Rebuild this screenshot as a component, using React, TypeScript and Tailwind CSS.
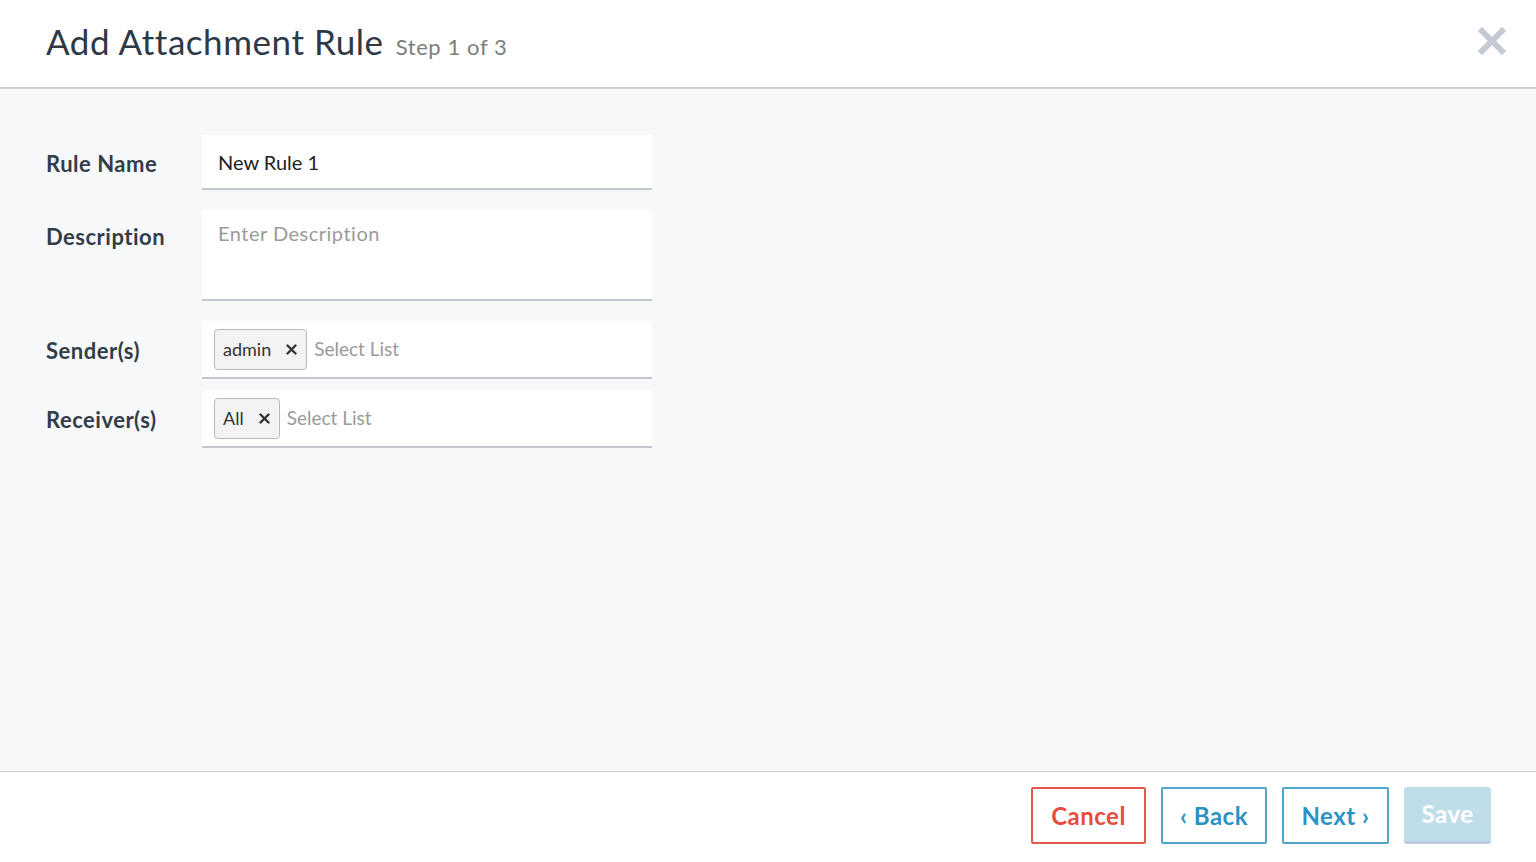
import React from "react";

function Tag({ label }: { label: string }) {
  return (
    <span className="flex items-center h-[41px] pl-[8px] pr-[8px] gap-[15px] bg-[#f3f3f3] border border-[#b9b9b9] rounded-[4px] text-[18px] text-[#333]">
      <span>{label}</span>
      <svg width="11" height="11" viewBox="0 0 11 11" className="mr-[1px]">
        <path d="M1.5 1.5 L9.5 9.5 M9.5 1.5 L1.5 9.5" stroke="#333" strokeWidth="2.4" strokeLinecap="round" />
      </svg>
    </span>
  );
}

export default function App() {
  return (
    <div className="w-[1536px] h-[862px] flex flex-col bg-white text-[#333c47]" style={{ fontFamily: "Lato, 'Noto Sans', sans-serif" }}>
      <header className="h-[89px] shrink-0 flex items-start justify-between border-b-2 border-[#cdd1d8] bg-white">
        <div className="flex items-baseline pl-[46px] pt-[15px]">
          <h1 className="text-[35px] font-normal text-[#2f3845] tracking-[0.55px]">Add Attachment Rule</h1>
          <span className="ml-[12px] text-[22px] text-[#7d7d7d] tracking-[0.6px]">Step 1 of 3</span>
        </div>
        <button className="mt-[27px] mr-[30px]">
          <svg width="28" height="28" viewBox="0 0 28 28">
            <path d="M4 4 L24 24 M24 4 L4 24" stroke="#c5c9d1" strokeWidth="6" strokeLinecap="square" />
          </svg>
        </button>
      </header>

      <main className="flex-1 bg-[#f7f8fa] pt-[46px] pl-[46px]">
        <div className="flex flex-col">
          <div className="flex items-start">
            <label className="w-[156px] pt-[12px] text-[22px] font-bold text-[#333d48] tracking-[0.5px]">Rule Name</label>
            <div className="w-[450px] h-[55px] bg-white border-b-2 border-[#c3c7d0] flex items-center px-[16px] text-[20px] text-[#222]">
              New Rule 1
            </div>
          </div>
          <div className="flex items-start mt-[20px]">
            <label className="w-[156px] pt-[10px] text-[22px] font-bold text-[#333d48] tracking-[0.5px]">Description</label>
            <div className="w-[450px] h-[91px] bg-white border-b-2 border-[#c3c7d0] px-[16px] pt-[8px] text-[20px] text-[#9a9a9a] tracking-[0.5px]">
              Enter Description
            </div>
          </div>
          <div className="flex items-center mt-[20px]">
            <label className="w-[156px] text-[22px] font-bold text-[#333d48] tracking-[0.5px]">Sender(s)</label>
            <div className="w-[450px] h-[58px] bg-white border-b-2 border-[#c3c7d0] flex items-center pl-[12px] gap-[7px]">
              <Tag label="admin" />
              <span className="text-[19px] text-[#9a9a9a]">Select List</span>
            </div>
          </div>
          <div className="flex items-center mt-[11px]">
            <label className="w-[156px] text-[22px] font-bold text-[#333d48] tracking-[0.5px]">Receiver(s)</label>
            <div className="w-[450px] h-[58px] bg-white border-b-2 border-[#c3c7d0] flex items-center pl-[12px] gap-[7px]">
              <Tag label="All" />
              <span className="text-[19px] text-[#9a9a9a]">Select List</span>
            </div>
          </div>
        </div>
      </main>

      <footer className="h-[91px] shrink-0 border-t border-[#c8ccd3] bg-white flex items-start justify-end pt-[15px] pr-[45px] gap-[15px]">
        <button className="w-[115px] h-[57px] border-2 border-[#e8564a] rounded-[2px] text-[24px] font-bold text-[#e84c3d] tracking-[0.5px]">Cancel</button>
        <button className="w-[106px] h-[57px] border-2 border-[#4ea6cf] rounded-[2px] text-[24px] font-bold text-[#2b93c4] tracking-[0.5px]">‹ Back</button>
        <button className="w-[107px] h-[57px] border-2 border-[#4ea6cf] rounded-[2px] text-[24px] font-bold text-[#2b93c4] tracking-[0.5px]">Next ›</button>
        <button className="w-[87px] h-[57px] bg-[#bfdeea] border-b-[3px] border-[#bccbe0] rounded-[3px] text-[24px] font-bold text-white tracking-[0.5px]">Save</button>
      </footer>
    </div>
  );
}
